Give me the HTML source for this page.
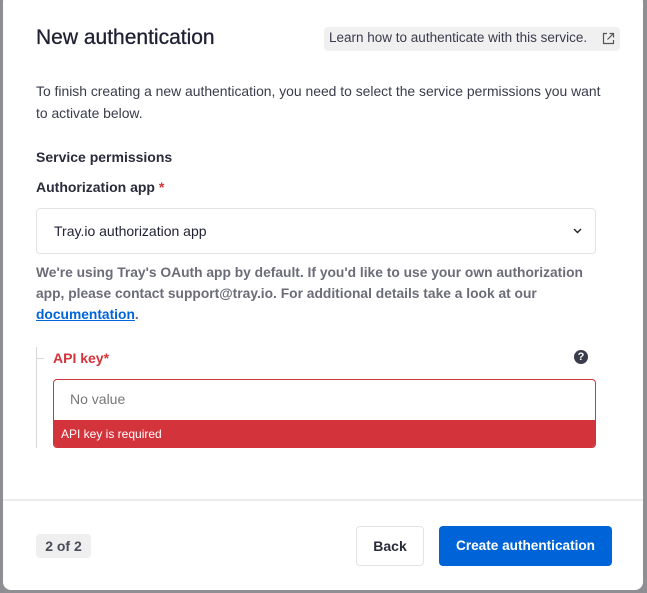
<!DOCTYPE html>
<html><head><style>
*{box-sizing:border-box;margin:0;padding:0}
body{width:647px;height:593px;background:#8f8e93;font-family:"Liberation Sans",sans-serif;position:relative;overflow:hidden;color:#1f2033}
.card{position:absolute;left:3px;top:-6px;width:640px;height:596px;background:#fff;border-radius:8px}
.a{position:absolute;white-space:nowrap}
</style></head><body>
<div class="card"></div>
<div class="a" style="left:36px;top:26px;font-size:21px;color:#1f2033;-webkit-text-stroke:0.3px #1f2033">New authentication</div>
<div class="a" style="left:324px;top:27px;width:296px;height:24px;background:#f0f0f1;border-radius:4px;font-size:13.5px;color:#3a3b4b;padding:3px 0 0 5px">Learn how to authenticate with this service.
<svg style="position:absolute;right:5px;top:5px" width="13" height="13" viewBox="0 0 13 13" fill="none" stroke="#555" stroke-width="1.2"><path d="M5 1.5H1.5v10h10V8M7.5 1.5h4v4M11.5 1.5L5.5 7.5"/></svg></div>
<div class="a" style="left:36px;top:80px;font-size:13.9px;line-height:22px;color:#3a3b4b;white-space:normal;width:572px">To finish creating a new authentication, you need to select the service permissions you want<br>to activate below.</div>
<div class="a" style="left:36px;top:149px;font-size:14px;font-weight:bold;color:#2a2b3b">Service permissions</div>
<div class="a" style="left:36px;top:179px;font-size:14px;font-weight:bold;color:#2a2b3b">Authorization app <span style="color:#d3333a">*</span></div>
<div class="a" style="left:36px;top:208px;width:560px;height:46px;border:1px solid #e3e3e6;border-radius:4px;font-size:14px;color:#1f2033;padding:14px 0 0 17px">Tray.io authorization app
<svg style="position:absolute;right:13px;top:19px" width="9" height="6" viewBox="0 0 9 6" fill="none" stroke="#222" stroke-width="1.4"><path d="M1 1l3.5 3.5L8 1"/></svg></div>
<div class="a" style="left:36px;top:262px;font-size:13.8px;line-height:21px;color:#6b6c78;font-weight:bold;white-space:normal;width:570px">We're using Tray's OAuth app by default. If you'd like to use your own authorization app, please contact support@tray.io. For additional details take a look at our <span style="color:#0064d9;text-decoration:underline">documentation</span>.</div>
<div class="a" style="left:36px;top:347px;width:1px;height:101px;background:#d6d6da"></div>
<div class="a" style="left:36px;top:358px;width:8px;height:1px;background:#d6d6da"></div>
<div class="a" style="left:53px;top:350px;font-size:14px;font-weight:bold;color:#d3333a">API key*</div>
<div class="a" style="left:574px;top:350px;width:14px;height:14px;border-radius:50%;background:#3a3b4b;color:#fff;font-size:11px;font-weight:bold;text-align:center;line-height:14px">?</div>
<div class="a" style="left:53px;top:379px;width:543px;height:69px;border:1px solid #d3333a;border-radius:4px;overflow:hidden">
<div style="padding:11px 0 0 16px;font-size:14px;color:#777">No value</div>
<div style="position:absolute;left:0;right:0;bottom:0;height:27px;background:#d3333a;color:#fff;font-size:12px;padding:7px 0 0 7px">API key is required</div></div>
<div class="a" style="left:3px;top:499px;width:640px;height:2px;background:#ececee"></div>
<div class="a" style="left:36px;top:534px;width:55px;height:24px;background:#efeff0;border-radius:4px;font-size:14px;font-weight:bold;color:#4a4b58;text-align:center;line-height:24px">2 of 2</div>
<div class="a" style="left:356px;top:526px;width:68px;height:40px;border:1px solid #e3e3e6;border-radius:4px;font-size:14px;font-weight:bold;color:#2a2b3b;text-align:center;line-height:38px">Back</div>
<div class="a" style="left:439px;top:526px;width:173px;height:40px;background:#0064d9;border-radius:4px;font-size:13.6px;font-weight:bold;color:#fff;text-align:center;line-height:40px">Create authentication</div>
</body></html>
